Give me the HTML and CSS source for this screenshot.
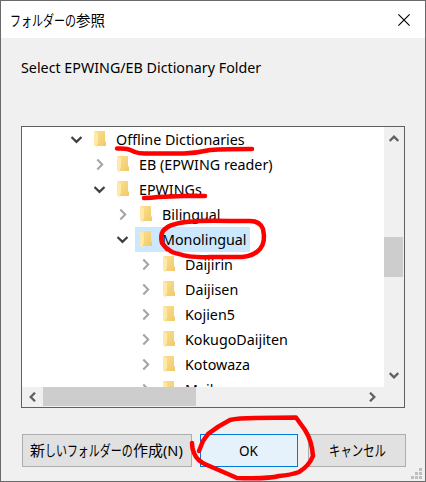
FILE: index.html
```html
<!DOCTYPE html>
<html lang="ja">
<head>
<meta charset="utf-8">
<title>フォルダーの参照</title>
<link rel="stylesheet" href="styles.css">
</head>
<body>
<svg class="defs" width="0" height="0">
  <defs>
    <linearGradient id="gold" x1="0" y1="0" x2="1" y2="1"><stop offset="0" stop-color="#fbdf92"/><stop offset="1" stop-color="#f0ca68"/></linearGradient>
    <symbol id="folder" viewBox="0 0 12 18">
      <path d="M1 0H11V10L12 11V15H1Z" fill="url(#gold)"/>
      <path d="M0 0L4 2.3V12L3 13V16.6L0 14.5Z" fill="#ffe9a9"/>
    </symbol>
    <symbol id="down" viewBox="0 0 12 8"><path d="M1 1L6 5.900L11 1" fill="none" stroke="#404040" stroke-width="2.2"/></symbol>
    <symbol id="right" viewBox="0 0 8 12"><path d="M1.3 1L6.2 6L1.3 11" fill="none" stroke="#a6a6a6" stroke-width="2.1"/></symbol>
    <symbol id="scroll" viewBox="0 0 10 8"><path d="M.7 1L5 5.3L9.3 1" fill="none" stroke="#606060" stroke-width="2.3"/></symbol>
  </defs>
</svg>
<div class="dialog">
  <header class="title">
    <h1><span class="kana k-title">フォルダーの</span><span>参照</span></h1>
    <svg class="close" width="12" height="12" viewBox="0 0 12 12"><path d="M.4 .4L11.6 11.6M11.6 .4L.4 11.6" stroke="#000" stroke-width="1.15"/></svg>
  </header>
  <p class="prompt"><span class="fit">Select EPWING/EB Dictionary Folder</span></p>
  <div class="box">
    <ul class="tree">
      <li class="l0"><svg class="arrow"><use href="#down" x="2.500" y="4" width="12" height="8"/></svg><svg class="icon"><use href="#folder"/></svg><span class="name"><span class="fit">Offline Dictionaries</span></span></li>
      <li class="l1"><svg class="arrow"><use href="#right" x="5" y="1.500" width="8" height="12"/></svg><svg class="icon"><use href="#folder"/></svg><span class="name"><span class="fit">EB (EPWING reader)</span></span></li>
      <li class="l1"><svg class="arrow"><use href="#down" x="2.500" y="4" width="12" height="8"/></svg><svg class="icon"><use href="#folder"/></svg><span class="name"><span class="fit">EPWINGs</span></span></li>
      <li class="l2"><svg class="arrow"><use href="#right" x="5" y="1.500" width="8" height="12"/></svg><svg class="icon"><use href="#folder"/></svg><span class="name"><span class="fit">Bilingual</span></span></li>
      <li class="l2 selected"><svg class="arrow"><use href="#down" x="2.500" y="4" width="12" height="8"/></svg><svg class="icon"><use href="#folder"/></svg><span class="name"><span class="fit">Monolingual</span></span></li>
      <li class="l3"><svg class="arrow"><use href="#right" x="5" y="1.500" width="8" height="12"/></svg><svg class="icon"><use href="#folder"/></svg><span class="name"><span class="fit">Daijirin</span></span></li>
      <li class="l3"><svg class="arrow"><use href="#right" x="5" y="1.500" width="8" height="12"/></svg><svg class="icon"><use href="#folder"/></svg><span class="name"><span class="fit">Daijisen</span></span></li>
      <li class="l3"><svg class="arrow"><use href="#right" x="5" y="1.500" width="8" height="12"/></svg><svg class="icon"><use href="#folder"/></svg><span class="name"><span class="fit">Kojien5</span></span></li>
      <li class="l3"><svg class="arrow"><use href="#right" x="5" y="1.500" width="8" height="12"/></svg><svg class="icon"><use href="#folder"/></svg><span class="name"><span class="fit">KokugoDaijiten</span></span></li>
      <li class="l3"><svg class="arrow"><use href="#right" x="5" y="1.500" width="8" height="12"/></svg><svg class="icon"><use href="#folder"/></svg><span class="name"><span class="fit">Kotowaza</span></span></li>
      <li class="l3"><svg class="arrow"><use href="#right" x="5" y="1.500" width="8" height="12"/></svg><svg class="icon"><use href="#folder"/></svg><span class="name"><span class="fit">Meikyo</span></span></li>
    </ul>
    <div class="vbar">
      <svg class="sa up" width="10" height="8"><use href="#scroll"/></svg>
      <div class="vthumb"></div>
      <svg class="sa" width="10" height="8"><use href="#scroll"/></svg>
    </div>
    <div class="hbar">
      <svg class="sa left" width="10" height="8"><use href="#scroll"/></svg>
      <div class="hthumb"></div>
      <svg class="sa toright" width="10" height="8"><use href="#scroll"/></svg>
    </div>
  </div>
  <footer>
    <button class="new"><span>新</span><span class="kana k-new">しいフォルダーの</span><span>作成</span><span class="fit">(N)</span></button>
    <button class="ok"><span class="fit">OK</span></button>
    <button class="cancel"><span class="kana k-cancel">キャンセル</span></button>
  </footer>
  <svg class="grip" width="11" height="11" viewBox="0 0 11 11"><path d="M8 0h3v3h-3zM4 4h3v3h-3zM8 4h3v3h-3zM0 8h3v3h-3zM4 8h3v3h-3zM8 8h3v3h-3z" fill="#bfbfbf"/></svg>
  <svg class="ink" width="426" height="482" viewBox="0 0 426 482">
    <path d="M117 148.500C126 148 129 149 135 152Q140 154 147 153.500H184Q197 153 210 150Q225 149 252 149"/>
    <path d="M144 198Q151 198 158 197L184 196L205 196"/>
    <path d="M167 249L162 243Q160 236 163 231Q168 224 186 222Q205 220 230 221H250Q260 221 263 229Q266 242 260 249Q254 256 242 257H210Q190 258 179 254Q172 253 168 249"/>
    <path d="M199 451L203 441L208 434Q218 426 230 420Q238 418 255 418L296 417.500L305 430Q312 441 313 456Q309 466 299 472Q291 475 279 476Q269 479 237 478L221 471L207 465Q197 461 194 453Q192 449 192 443"/>
  </svg>
</div>
</body>
</html>
```
FILE: styles.css
```css
* { box-sizing: border-box; }
body { margin: 0; font: 15px/25px "Noto Sans", "Noto Sans CJK JP", sans-serif; color: #000; }
.defs { position: absolute; }
.dialog { position: relative; width: 426px; height: 482px; border: 1px solid #6a6a6a; background: #f0f0f0; overflow: hidden; }
.title { height: 37px; padding: 0 15px 0 9px; background: #fff; display: flex; align-items: center; justify-content: space-between; }
h1 { margin: 0; font-size: 14.500px; font-weight: 400; display: flex; font-family: "Noto Sans CJK JP", sans-serif; }
.fit { display: inline-block; transform: scaleX(.952); transform-origin: left; white-space: nowrap; }
.kana { display: block; white-space: nowrap; transform: scaleX(.76); transform-origin: left; }
.k-title { width: 66px; }
.prompt { margin: 0 0 0 20px; padding-top: 17px; height: 88px; }
.box { margin-left: 20px; width: 384px; height: 282px; border: 1px solid #606060; display: grid; grid-template: 260px 20px / 362px 20px; background: #f0f0f0; }
.tree { margin: 0; padding: 0; list-style: none; overflow: hidden; background: #fff; }
.tree li { height: 25px; display: flex; align-items: flex-start; }
.l0 { padding-left: 46px; }
.l1 { padding-left: 69px; }
.l2 { padding-left: 92px; }
.l3 { padding-left: 115px; }
.arrow { width: 16px; height: 16px; flex: none; margin: 5px 9px 0 0; }
.icon { width: 12px; height: 18px; flex: none; margin: 4px 7px 0 1px; }
.name { padding-left: 2.500px; height: 25px; }
.selected { background: linear-gradient(#cce8ff, #cce8ff) 113px 0 / 115px 25px no-repeat; }
.vbar { display: flex; flex-direction: column; align-items: center; padding: 7px 1px 7px 0; }
.vthumb { width: 19px; height: 40px; margin: 95px 0 auto; background: #cdcdcd; }
.hbar { grid-column: 1 / 3; display: flex; align-items: center; padding: 0 26px 1px 5px; }
.hthumb { width: 153px; height: 19px; margin: 0 auto 0 6px; background: #cdcdcd; }
.sa { flex: none; }
.up { transform: rotate(180deg); }
.left { transform: rotate(90deg); }
.toright { transform: rotate(-90deg); }
footer { display: flex; margin: 26px 0 0 21px; }
button { height: 33px; margin: 0; padding: 0; border: 1px solid #adadad; background: #e1e1e1; color: #000; display: flex; align-items: center; font: 15px/25px "Noto Sans", "Noto Sans CJK JP", sans-serif; }
.new { width: 170px; padding-left: 7px; }
.k-new { width: 88px; transform: scaleX(.73); }
.new .fit { transform: scaleX(.97); }
.ok { width: 98px; margin-left: 8px; padding-left: 38px; border-color: #0078d7; background: #e5f1fb; }
.ok .fit { transform: scaleX(.9); }
.cancel { width: 98px; margin-left: 10px; padding-left: 20px; }
.grip { position: absolute; right: 3px; bottom: 2px; }
.ink { position: absolute; left: -1px; top: -1px; fill: none; stroke: #f00; stroke-width: 4.500; stroke-linecap: round; stroke-linejoin: round; }
```
